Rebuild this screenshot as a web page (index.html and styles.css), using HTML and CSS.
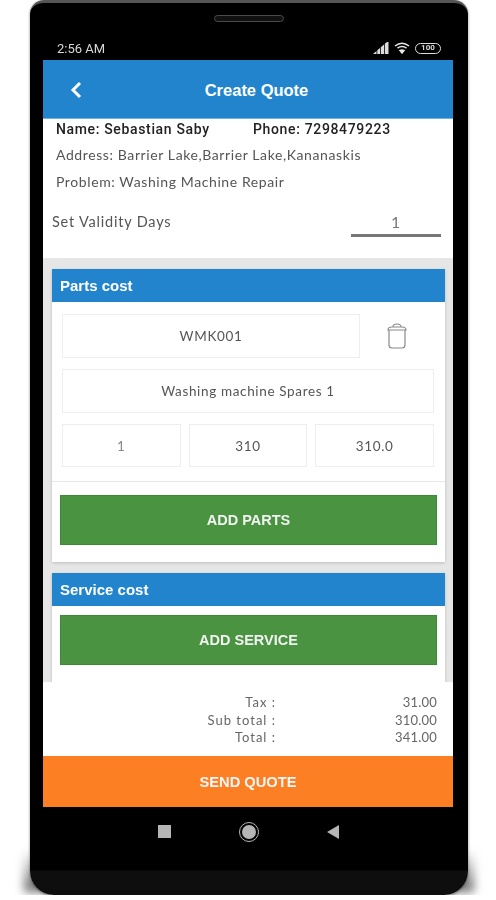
FILE: index.html
```html
<!DOCTYPE html>
<html lang="en">
<head>
    <meta charset="UTF-8">
    <meta name="viewport" content="width=device-width, initial-scale=1.0">
    <title>Create Quote</title>
    <link rel="stylesheet" href="styles.css">
</head>
<body>
    <div class="device">
        <div class="device-shadow"></div>
        <div class="phone">
            <div class="speaker-row"><div class="speaker"></div></div>

            <div class="status-bar">
                <span class="status-time">2:56 AM</span>
                <div class="status-icons">
                    <svg width="16" height="12" viewBox="0 0 16 12">
                        <path d="M0 12 L3.500 9 V12 Z M4.300 12 V8.300 L7 6 V12 Z M7.800 12 V5.300 L11 2.500 V12 Z M11.800 12 V1.800 L14 0 H15.500 V12 Z" fill="#dcdcdc"/>
                    </svg>
                    <svg width="16" height="12" viewBox="0 0 16 12" fill="none" stroke="#e8e8e8" stroke-width="1.500">
                        <path d="M1 4 Q8 -1.500 15 4"/>
                        <path d="M3.500 6.200 Q8 3 12.500 6.200"/>
                        <path d="M6 8.500 Q8 7.300 10 8.500 L8 11 Z" fill="#e8e8e8"/>
                    </svg>
                    <div class="battery">100</div>
                </div>
            </div>

            <div class="screen">
                <div class="app-bar">
                    <svg class="back" width="12" height="18" viewBox="0 0 12 18" fill="none" stroke="#fff" stroke-width="3">
                        <path d="M10 2 L3 9 L10 16"/>
                    </svg>
                    <h1>Create Quote</h1>
                </div>

                <div class="info">
                    <div class="customer">
                        <span class="customer-name">Name: Sebastian Saby</span>
                        <span>Phone: 7298479223</span>
                    </div>
                    <div class="info-line">Address: Barrier Lake,Barrier Lake,Kananaskis</div>
                    <div class="info-line">Problem: Washing Machine Repair</div>
                    <div class="validity">
                        <span>Set Validity Days</span>
                        <span class="validity-input">1</span>
                    </div>
                </div>

                <div class="costs">
                    <section class="card parts">
                        <h2>Parts cost</h2>
                        <div class="part-fields">
                            <div class="code-row">
                                <div class="field code">WMK001</div>
                                <svg class="trash" width="22" height="28" viewBox="0 0 22 28" fill="none" stroke="#8a8a8a" stroke-width="1.200">
                                    <path d="M7 5 Q7 2 11 2 Q15 2 15 5"/>
                                    <path d="M2 8 Q2 5 6 5 H16 Q20 5 20 8 Z"/>
                                    <path d="M3 8 V23 Q3 26 6 26 H16 Q19 26 19 23 V8"/>
                                </svg>
                            </div>
                            <div class="field">Washing machine Spares 1</div>
                            <div class="amount-row">
                                <div class="field light">1</div>
                                <div class="field">310</div>
                                <div class="field">310.0</div>
                            </div>
                        </div>
                        <div class="card-action divided">
                            <button class="add-button">ADD PARTS</button>
                        </div>
                    </section>

                    <section class="card service">
                        <h2>Service cost</h2>
                        <div class="card-action">
                            <button class="add-button">ADD SERVICE</button>
                        </div>
                    </section>
                </div>

                <div class="totals">
                    <div class="total-row"><span class="total-label">Tax :</span><span class="total-value">31.00</span></div>
                    <div class="total-row"><span class="total-label">Sub total :</span><span class="total-value">310.00</span></div>
                    <div class="total-row"><span class="total-label">Total :</span><span class="total-value">341.00</span></div>
                </div>

                <button class="send-button">SEND QUOTE</button>
            </div>

            <div class="nav-bar">
                <div class="nav-square"></div>
                <div class="nav-circle"><div class="nav-dot"></div></div>
                <div class="nav-back"></div>
            </div>
        </div>
    </div>
</body>
</html>
```

FILE: styles.css
```css
body {
    margin: 0;
    background-color: white;
    font-family: "Lato", "Open Sans", sans-serif;
    overflow: hidden;
}
.device {
    position: relative;
    width: 438px;
    margin-left: 30px;
}
.device-shadow {
    position: absolute;
    left: -6px;
    right: -6px;
    bottom: 3px;
    height: 42px;
    background: linear-gradient(transparent, #666);
    filter: blur(5px);
}
.phone {
    position: relative;
    height: 895px;
    box-sizing: border-box;
    padding: 0 15px 0 13px;
    background: linear-gradient(#000 867px, #0e0e0e 868px);
    border-top: 3px solid #555;
    border-radius: 14px 14px 24px 24px;
    box-shadow: 0 1px 3px rgba(0, 0, 0, 0.45);
    filter: blur(0.35px);
}
.speaker-row {
    display: flex;
    justify-content: center;
    padding: 12px 0 0 1px;
    height: 24px;
    box-sizing: border-box;
}
.speaker {
    width: 70px;
    height: 7px;
    box-sizing: border-box;
    border: 1px solid #4a4a4a;
    border-radius: 4px;
    background-color: #111;
}
.status-bar {
    height: 33px;
    display: flex;
    justify-content: space-between;
    align-items: center;
    padding: 9px 12px 0 14px;
    box-sizing: border-box;
    color: #d8d8d8;
}
.status-time {
    font-family: "Roboto", sans-serif;
    font-size: 13px;
}
.status-icons {
    display: flex;
    align-items: center;
    gap: 5px;
}
.battery {
    width: 26px;
    height: 11px;
    box-sizing: border-box;
    border: 1.500px solid #ddd;
    border-radius: 6px;
    color: #ddd;
    font-family: "Roboto", sans-serif;
    font-size: 8px;
    font-weight: bold;
    line-height: 8px;
    text-align: center;
}
.screen {
    height: 747px;
    background-color: white;
    display: flex;
    flex-direction: column;
}
.app-bar {
    height: 59px;
    flex: none;
    box-sizing: border-box;
    padding-top: 2px;
    border-bottom: 1px solid #6fb3e3;
    background-color: #2284cc;
    display: flex;
    align-items: center;
    justify-content: center;
    position: relative;
}
.app-bar h1 {
    margin: 0 0 0 17px;
    color: white;
    font-family: "Liberation Sans", sans-serif;
    font-size: 16.500px;
    font-weight: bold;
}
.back {
    position: absolute;
    left: 27px;
    top: 21px;
}
.info {
    height: 139px;
    flex: none;
    box-sizing: border-box;
    padding: 0 12px 0 13px;
    color: #555;
    font-size: 14px;
}
.customer {
    display: flex;
    height: 20px;
    align-items: center;
    color: #222;
    font-family: "Roboto", sans-serif;
    font-size: 14px;
    font-weight: 500;
    letter-spacing: 0.65px;
}
.customer-name {
    width: 197px;
}
.info-line {
    height: 26.500px;
    line-height: 31px;
    letter-spacing: 0.6px;
}
.validity {
    display: flex;
    justify-content: space-between;
    margin: 16px 0 0 -4px;
    height: 34px;
}
.validity span {
    line-height: 28px;
    font-size: 14.500px;
    letter-spacing: 0.8px;
}
.validity .validity-input {
    width: 90px;
    height: 26px;
    border-bottom: 3px solid #777;
    text-align: center;
    font-size: 16px;
    color: #777;
}
.costs {
    height: 424px;
    flex: none;
    box-sizing: border-box;
    overflow: hidden;
    padding: 11px 8px 0 9px;
    background-color: #e6e6e6;
}
.card {
    background-color: white;
    box-shadow: 0 1px 3px rgba(0, 0, 0, 0.18);
}
.card h2 {
    margin: 0;
    height: 33px;
    line-height: 33px;
    padding-left: 8px;
    background-color: #2284cc;
    color: white;
    font-family: "Liberation Sans", sans-serif;
    font-size: 15px;
    font-weight: bold;
}
.parts {
    height: 293px;
    margin-bottom: 11px;
}
.service {
    height: 130px;
}
.part-fields {
    display: flex;
    flex-direction: column;
    gap: 11px;
    padding: 12px 11px 14px 10px;
}
.code-row {
    display: flex;
    align-items: center;
}
.code {
    width: 298px;
}
.trash {
    margin-left: 26px;
}
.field {
    height: 44px;
    flex: none;
    box-sizing: border-box;
    border: 1px solid #eee;
    display: flex;
    align-items: center;
    justify-content: center;
    color: #555;
    font-size: 13.500px;
    letter-spacing: 0.65px;
}
.amount-row .field {
    height: 43px;
}
.light {
    color: #888;
}
.amount-row {
    display: grid;
    grid-template-columns: repeat(3, 1fr);
    gap: 8px;
}
.card-action {
    padding: 9px 8px;
}
.card-action.divided {
    padding-top: 13px;
    border-top: 1px solid #e8e8e8;
}
.add-button {
    display: block;
    width: 100%;
    height: 50px;
    border: 1px solid #3d8a34;
    background-color: #4a9340;
    color: #f2f2f2;
    font-family: "Liberation Sans", sans-serif;
    font-size: 14.500px;
    font-weight: bold;
}
.totals {
    height: 74px;
    flex: none;
    box-sizing: border-box;
    padding-top: 12px;
    color: #666;
    font-size: 13px;
    letter-spacing: 1px;
}
.total-row {
    display: flex;
    height: 17.700px;
    line-height: 17.700px;
}
.total-label {
    width: 233px;
    text-align: right;
}
.total-value {
    width: 161px;
    text-align: right;
    letter-spacing: 0.2px;
}
.send-button {
    height: 51px;
    flex: none;
    border: none;
    background-color: #fd7f23;
    color: #f6f6f6;
    font-family: "Liberation Sans", sans-serif;
    font-size: 14.700px;
    font-weight: bold;
}
.nav-bar {
    display: flex;
    justify-content: center;
    align-items: center;
    gap: 68px;
    height: 49px;
}
.nav-square {
    width: 13px;
    height: 13px;
    background-color: #b5b5b5;
}
.nav-circle {
    width: 20px;
    height: 20px;
    box-sizing: border-box;
    border: 1px solid #b5b5b5;
    border-radius: 50%;
    display: flex;
    align-items: center;
    justify-content: center;
}
.nav-dot {
    width: 14px;
    height: 14px;
    border-radius: 50%;
    background-color: #b5b5b5;
}
.nav-back {
    width: 0;
    height: 0;
    border-top: 7px solid transparent;
    border-bottom: 7px solid transparent;
    border-right: 12px solid #b5b5b5;
}
```
